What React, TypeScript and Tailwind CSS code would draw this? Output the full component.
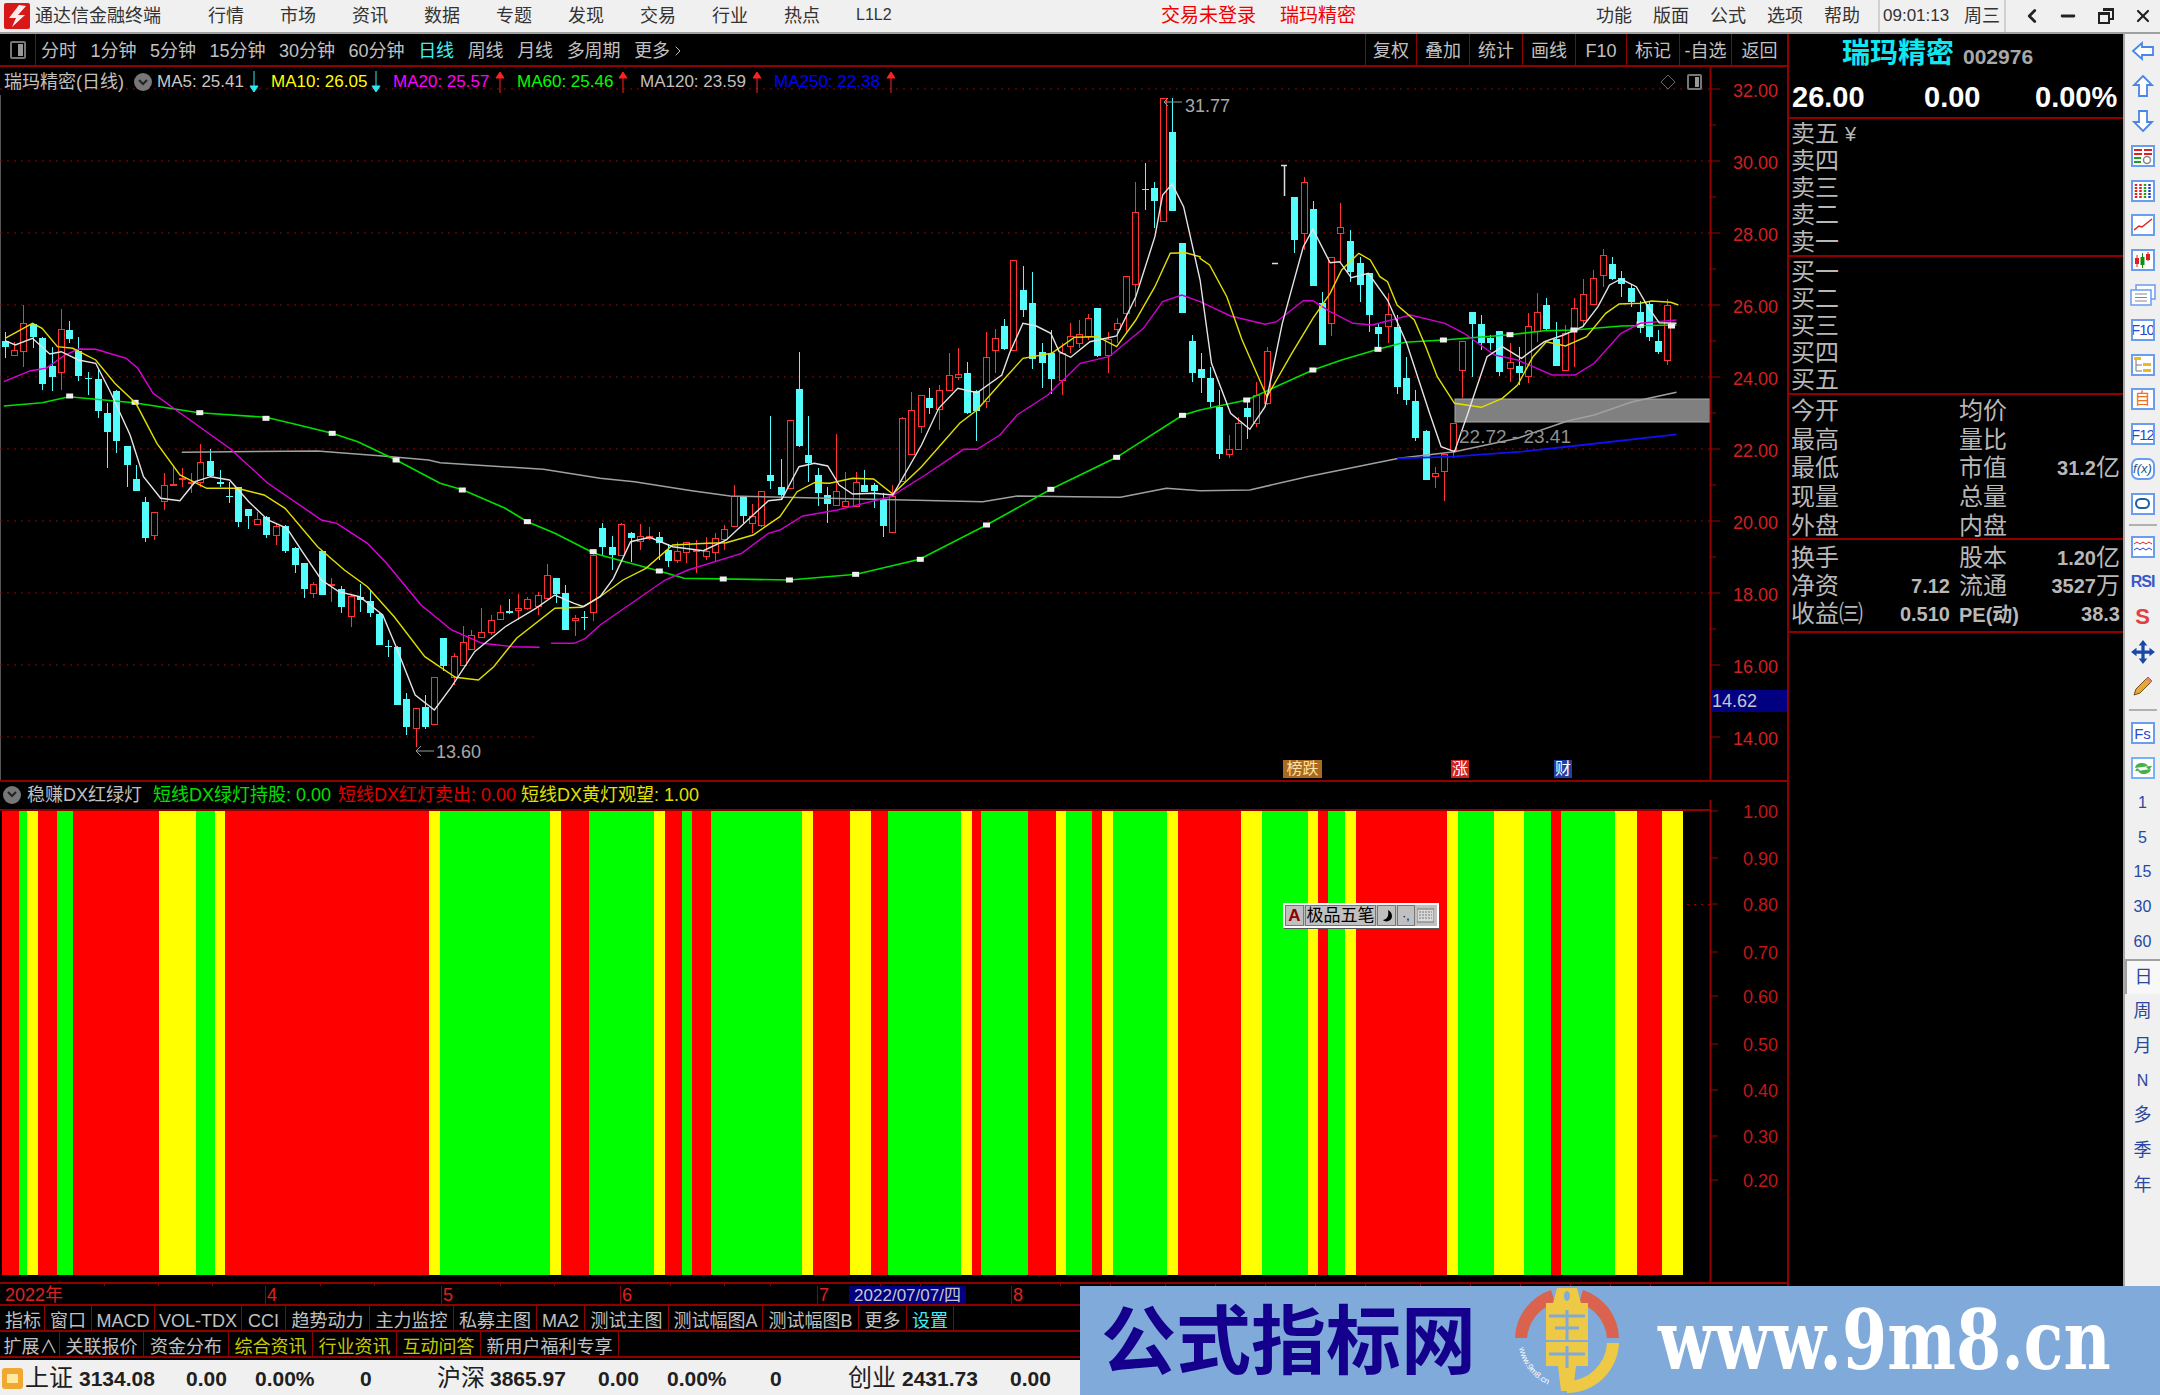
import React from 'react'
import { ChevronLeft, ChevronRight, Minus, X } from 'lucide-react'

type Candle = [number, number, number, number, number, number]
type Pt = [number, number]

const to8 = ([x, y]: Pt): Pt => [x / 2.613, 280 + y / 3]
const to9 = ([x, y]: Pt): Pt => [600 + x / 2.613, 80 + y / 3]
const to10 = ([x, y]: Pt): Pt => [1200 + x / 2.613, 130 + y / 3]

// x, wick top, body top, body bottom, wick bottom, 1 = red hollow / 0 = cyan
const candles8: Candle[] = [
  [13,155,182,200,235,0],[37,185,210,226,226,1],[61,75,130,215,262,1],[85,130,132,172,205,0],[111,172,175,313,330,0],
  [135,200,258,290,333,0],[159,88,148,278,330,1],[181,124,150,178,190,0],[205,170,212,288,303,0],[231,277,295,297,345,0],
  [257,265,296,393,415,0],[280,368,400,456,563,0],[304,330,332,483,518,0],[331,497,498,555,622,0],[355,555,597,632,632,0],
  [378,652,665,775,785,0],[402,697,697,765,780,1],[428,578,616,665,690,1],[452,560,612,616,616,1],[475,565,596,598,622,1],
  [498,578,606,610,640,1],[522,492,548,608,620,1],[550,508,542,588,590,0],[574,570,605,612,622,0],[598,605,648,652,668,0],
  [622,622,622,726,740,0],[648,686,687,708,748,0],[672,695,718,733,733,1],[696,708,710,766,775,0],[720,730,740,766,795,1],
  [746,736,737,812,820,0],[770,800,804,856,880,0],[794,848,848,928,955,0],[817,905,912,940,955,1],[841,812,812,946,946,0],
  [866,895,912,916,965,1],[892,918,926,982,998,0],[916,945,950,1008,1040,1],[940,912,950,960,995,0],[966,932,962,998,1010,0],
  [990,1000,1002,1095,1095,0],[1014,1080,1098,1100,1130,0],[1037,1098,1100,1275,1275,0],[1060,1240,1258,1340,1365,0],
  [1088,1285,1286,1345,1400,1],[1111,1245,1280,1342,1348,0],[1134,1190,1192,1332,1332,1],[1158,1074,1074,1158,1172,0],
  [1185,1118,1128,1192,1215,1],[1209,1038,1088,1156,1156,1],[1232,1050,1066,1108,1108,1],[1256,985,1057,1072,1072,1],
  [1284,1005,1020,1058,1065,1],[1306,975,998,1018,1020,1],[1330,957,993,998,1002,0],[1354,942,985,992,1020,1],
  [1378,950,958,985,990,1],[1405,935,945,978,1005,1],[1429,853,886,955,955,1],[1452,893,893,942,970,0],[1476,915,940,1050,1050,0],
  [1503,1005,1016,1020,1068,1],[1527,993,1010,1015,1050,0],[1550,820,825,998,1022,1],
]
const candles9: Candle[] = [
  [5,1330,1345,1400,1425,0],[32,1368,1400,1425,1470,0],[56,1330,1333,1425,1425,1],[80,1355,1360,1375,1445,0],[104,1332,1370,1385,1410,1],
  [128,1340,1370,1375,1380,1],[154,1355,1370,1390,1440,0],[178,1392,1410,1442,1462,0],[202,1385,1415,1442,1450,1],[226,1385,1388,1418,1450,1],
  [252,1380,1410,1412,1478,1],[276,1370,1415,1428,1440,1],[300,1360,1375,1418,1445,1],[323,1335,1347,1378,1410,1],[351,1215,1250,1338,1340,1],
  [374,1248,1250,1308,1330,0],[398,1272,1310,1330,1360,1],[421,1232,1234,1335,1340,1],[445,1008,1184,1203,1228,0],[472,1138,1220,1245,1258,0],
  [496,1022,1022,1225,1225,1],[520,815,927,1098,1100,0],[543,1008,1125,1150,1205,0],[570,1165,1184,1240,1278,0],[594,1222,1244,1272,1330,0],
  [617,1062,1234,1276,1276,1],[641,1175,1265,1280,1280,1],[668,1175,1208,1280,1280,1],[691,1170,1215,1236,1236,0],[715,1208,1216,1232,1285,0],
  [739,1238,1258,1338,1370,0],[763,1215,1250,1356,1356,1],[790,1012,1014,1203,1205,1],[813,935,990,1122,1122,1],[838,945,945,1040,1060,1],
  [860,925,955,983,1002,0],[887,915,932,988,1050,1],[911,818,887,932,932,1],[935,805,882,892,900,1],[959,845,878,998,1002,0],[983,930,932,992,1082,0],
  [1008,755,832,963,985,1],[1033,748,775,810,880,1],[1056,718,738,808,810,0],[1079,540,540,812,812,1],[1106,558,630,690,710,0],[1130,575,670,838,868,0],
  [1155,790,815,848,925,0],[1178,750,820,898,942,0],[1206,790,820,902,945,1],[1228,728,770,798,820,1],[1252,720,762,790,805,1],[1276,702,716,768,780,1],
  [1299,685,685,828,832,0],[1327,755,778,825,880,1],[1351,715,730,748,790,1],[1374,590,590,700,760,1],[1398,305,397,612,680,1],[1425,250,328,330,390,0],
  [1448,305,323,362,445,0],[1472,55,55,425,425,1],[1495,55,155,393,393,0],[1522,490,490,700,700,0],[1547,765,783,880,905,0],
]
const candles10: Candle[] = [
  [2,670,718,745,790,0],[26,710,745,815,830,0],[50,780,832,973,988,0],[76,915,958,972,985,1],[100,860,880,958,958,1],[123,815,835,860,928,0],
  [147,755,795,880,890,1],[175,650,665,820,825,1],[245,200,200,330,370,0],[271,142,157,310,360,1],[296,213,237,468,468,0],[319,485,520,645,645,0],
  [343,380,382,580,618,1],[366,218,292,310,400,1],[393,300,332,425,455,0],[418,380,398,465,515,0],[441,430,430,555,605,0],[465,580,592,612,650,0],
  [491,490,552,590,640,1],[515,555,592,770,793,0],[539,680,745,810,825,0],[563,780,813,925,933,0],[590,900,902,1050,1050,0],[613,1010,1030,1040,1075,1],
  [637,972,973,1025,1112,1],[660,880,880,960,985,1],[684,635,635,720,803,1],[711,547,547,582,740,0],[735,555,583,640,660,0],[759,615,623,640,660,0],
  [782,602,602,725,738,0],[810,640,697,715,755,1],[833,650,708,730,765,0],[856,550,590,740,760,1],[880,488,548,605,635,1],[904,505,525,597,600,0],
  [931,575,628,708,708,0],[954,585,610,720,720,1],[977,505,535,600,710,1],[1002,448,494,570,592,1],[1028,420,445,522,525,1],[1052,358,377,436,470,1],
  [1076,380,403,447,450,0],[1100,422,445,463,500,0],[1127,465,475,516,530,0],[1150,512,547,595,608,0],[1174,515,522,622,632,0],[1197,600,632,667,672,0],
  [1221,508,525,690,705,1],
]

const ma5: Pt[] = [
  ...([[13,182],[40,195],[85,175],[130,222],[160,215],[205,240],[250,250],[290,340],[340,465],[375,590],[420,655],[470,662],[510,605],[550,590],[600,600],[650,665],[700,720],[750,745],[790,815],[840,900],[885,935],[940,950],[1000,1005],[1035,1100],[1085,1245],[1135,1290],[1180,1220],[1240,1115],[1320,1040],[1400,985],[1450,945],[1500,970],[1525,980],[1568,950]] as Pt[]).map(to8),
  ...([[35,1495],[80,1385],[130,1372],[190,1400],[270,1412],[330,1380],[440,1262],[475,1258],[520,1160],[560,1150],[595,1158],[625,1215],[660,1242],[715,1240],[765,1245],[840,1095],[885,985],[935,925],[985,938],[1050,885],[1070,820],[1105,730],[1140,738],[1178,760],[1200,815],[1230,832],[1280,785],[1350,768],[1400,650],[1450,470],[1470,345],[1495,312],[1525,380],[1568,600]] as Pt[]).map(to9),
  ...([[30,700],[80,850],[130,898],[170,830],[215,580],[270,350],[295,298],[340,398],[365,395],[395,443],[440,430],[490,510],[540,640],[600,850],[630,950],[665,965],[700,850],[750,680],[790,650],[840,685],[900,635],[950,615],[1000,590],[1040,530],[1070,465],[1100,447],[1140,470],[1170,530],[1200,578],[1245,580]] as Pt[]).map(to10),
]
const ma10: Pt[] = [
  ...([[13,175],[85,130],[110,145],[150,200],[190,205],[250,240],[300,310],[355,370],[410,490],[470,585],[540,625],[620,625],[690,645],[745,685],[830,800],[900,870],[960,920],[1030,1010],[1110,1130],[1190,1192],[1250,1200],[1290,1160],[1350,1075],[1450,985],[1520,982],[1568,950]] as Pt[]).map(to8),
  ...([[60,1500],[120,1465],[190,1395],[280,1390],[330,1388],[400,1365],[470,1310],[515,1235],[560,1208],[600,1210],[660,1195],[715,1197],[765,1242],[840,1160],[940,1030],[985,990],[1050,905],[1105,835],[1180,820],[1240,772],[1300,770],[1350,800],[1400,720],[1450,620],[1490,520],[1530,518],[1568,530]] as Pt[]).map(to9),
  ...([[0,385],[25,405],[70,500],[110,630],[175,800],[240,670],[295,565],[340,490],[370,420],[415,370],[445,390],[470,440],[490,455],[515,525],[560,570],[590,650],[620,740],[665,820],[735,832],[790,805],[830,765],[870,680],[905,635],[955,648],[1010,620],[1060,550],[1095,522],[1150,520],[1180,513],[1230,517],[1250,525]] as Pt[]).map(to10),
]
const ma20a: Pt[] = ([[10,305],[80,272],[120,265],[170,225],[205,207],[250,208],[330,235],[360,265],[400,340],[460,390],[600,505],[700,610],[840,720],[880,730],[960,790],[1010,850],[1100,975],[1180,1050],[1260,1090],[1340,1100],[1410,1102]] as Pt[]).map(to8)
const ma20b: Pt[] = [
  ...([[1440,1090],[1500,1090],[1530,1075],[1568,1035]] as Pt[]).map(to8),
  ...([[170,1500],[230,1470],[370,1420],[440,1360],[470,1350],[530,1308],[620,1290],[760,1250],[850,1185],[950,1108],[985,1108],[1045,1065],[1090,1005],[1170,945],[1255,850],[1330,830],[1420,745],[1470,665],[1520,645],[1568,665]] as Pt[]).map(to9),
  ...([[80,558],[170,583],[200,575],[270,512],[295,512],[340,545],[400,580],[450,585],[550,555],[640,580],[690,610],[770,675],[830,690],[920,735],[980,735],[1030,700],[1100,610],[1150,580],[1245,570]] as Pt[]).map(to10),
]
const ma60: Pt[] = [
  ...([[10,378],[110,368],[180,350],[350,368],[520,398],[695,412],[780,435],[868,460],[935,485],[1035,540],[1150,610],[1210,630],[1320,685],[1378,725],[1450,760],[1550,818],[1568,825]] as Pt[]).map(to8),
  ...([[155,1473],[220,1495],[495,1500],[670,1483],[835,1438],[1010,1335],[1178,1228],[1350,1132],[1522,1006],[1568,990]] as Pt[]).map(to9),
  ...([[122,810],[295,720],[370,690],[465,658],[535,637],[636,630],[810,614],[900,602],[977,600],[1100,588],[1245,585]] as Pt[]).map(to10),
]
const ma120: Pt[] = [
  ...([[475,517],[830,513],[905,520],[1000,528],[1120,540],[1150,548],[1420,568],[1568,595]] as Pt[]).map(to8),
  ...([[90,1205],[240,1232],[340,1248],[1000,1265],[1090,1248],[1240,1250],[1360,1252],[1480,1225],[1568,1232]] as Pt[]).map(to9),
  ...([[130,1080],[280,1040],[520,985],[665,965],[830,925],[960,873],[1030,855],[1130,815],[1245,787]] as Pt[]).map(to10),
]
const ma250: Pt[] = ([[515,985],[660,980],[840,965],[1000,945],[1245,913]] as Pt[]).map(to10)
const markers: Pt[] = [
  ...([[182,348],[353,367],[522,398],[695,415],[868,460],[1035,540],[1208,630],[1378,725],[1550,815]] as Pt[]).map(to8),
  ...([[155,1473],[322,1497],[495,1500],[668,1483],[837,1438],[1010,1335],[1178,1228],[1350,1132],[1522,1006]] as Pt[]).map(to9),
  ...([[122,810],[295,720],[465,658],[636,630],[810,614],[977,600],[1150,582],[1232,588]] as Pt[]).map(to10),
]

const toPoints = (pts: Pt[]) => pts.map(([x, y]) => `${x.toFixed(1)},${y.toFixed(1)}`).join(' ')

const R = '#ff0000'
const G = '#00ff00'
const Y = '#ffff00'
const stripes: [number, number, string][] = [
  [2,19,R],[19,27,G],[27,38,Y],[38,57,R],[57,73,G],[73,159,R],[159,196,Y],[196,215,G],[215,225,Y],[225,429,R],[429,440,Y],[440,550,G],[550,561,Y],[561,589,R],
  [589,654,G],[654,665,Y],[665,682,R],[682,692,G],[692,711,R],[711,802,G],[802,813,Y],[813,850,R],[850,871,Y],[871,888,R],[888,961,G],[961,972,Y],[972,981,R],
  [981,1028,G],[1028,1056,R],[1056,1066,Y],[1066,1092,G],[1092,1102,R],[1102,1113,Y],[1113,1167,G],[1167,1178,Y],[1178,1241,R],[1241,1262,Y],[1262,1308,G],
  [1308,1318,Y],[1318,1328,R],[1328,1345,G],[1345,1356,Y],[1356,1447,R],[1447,1458,Y],[1458,1494,G],[1494,1524,Y],[1524,1551,G],[1551,1561,R],[1561,1615,G],
  [1615,1637,Y],[1637,1662,R],[1662,1683,Y],
]

function CandleMark({ c, conv }: { c: Candle; conv: (p: Pt) => Pt }) {
  const [x, wt] = conv([c[0], c[1]])
  const [, bt] = conv([c[0], c[2]])
  const [, bb] = conv([c[0], c[3]])
  const [, wb] = conv([c[0], c[4]])
  const cx = Math.round(x) + 0.5
  const color = c[5] ? '#ff3232' : '#54fcfc'
  return (
    <g shapeRendering="crispEdges">
      <line x1={cx} x2={cx} y1={wt} y2={wb} stroke={color} strokeWidth={1} />
      {c[5] ? (
        <rect x={cx - 3} y={bt} width={6} height={Math.max(bb - bt, 1)} fill="#000" stroke={color} strokeWidth={1} />
      ) : (
        <rect x={cx - 3.5} y={bt} width={7} height={Math.max(bb - bt, 1)} fill={color} />
      )}
    </g>
  )
}

function MainChart() {
  const grid = [32, 30, 28, 26, 24, 22, 20, 18]
  const yOf = (p: number) => 305 + (26 - p) * 36
  return (
    <svg width={1787} height={713} viewBox="0 67 1787 713" className="block">
      <line x1={0.5} x2={0.5} y1={95} y2={780} stroke="#555" />
      {grid.map(p => (
        <line key={p} x1={0} x2={1710} y1={yOf(p)} y2={yOf(p)} stroke="#a00000" strokeDasharray="2 5" />
      ))}
      {[16, 14].map(p => (
        <line key={p} x1={0} x2={538} y1={yOf(p)} y2={yOf(p)} stroke="#a00000" strokeDasharray="2 5" />
      ))}
      {candles8.map((c, i) => <CandleMark key={i} c={c} conv={to8} />)}
      {candles9.map((c, i) => <CandleMark key={i} c={c} conv={to9} />)}
      {candles10.map((c, i) => <CandleMark key={i} c={c} conv={to10} />)}
      <path d="M1281 165.500h6M1284.500 166v30M1272 263.500h6" stroke="#ddd" fill="none" strokeWidth={1.5} />
      <rect x={1455} y={399} width={255} height={23} fill="#808080" stroke="#aaa" strokeWidth={1} />
      <polyline points={toPoints(ma120)} fill="none" stroke="#a0a0a0" strokeWidth={1.5} />
      <polyline points={toPoints(ma250)} fill="none" stroke="#1010f0" strokeWidth={1.8} />
      <polyline points={toPoints(ma60)} fill="none" stroke="#00e000" strokeWidth={1.6} />
      {markers.map(([x, y], i) => (
        <rect key={i} x={x - 3.5} y={y - 2.5} width={7} height={5} fill="#f0f0f0" />
      ))}
      <polyline points={toPoints(ma20a)} fill="none" stroke="#e000e0" strokeWidth={1.4} />
      <polyline points={toPoints(ma20b)} fill="none" stroke="#d000d0" strokeWidth={1.4} />
      <polyline points={toPoints(ma10)} fill="none" stroke="#e0e000" strokeWidth={1.4} />
      <polyline points={toPoints(ma5)} fill="none" stroke="#e4e4e4" strokeWidth={1.4} />
      <path d="M1182 102h-18m4-4l-4 4 4 4" stroke="#999" fill="none" />
      <text x={1185} y={112} fill="#a8a8a8" fontSize={18}>31.77</text>
      <path d="M434 751h-18m5-5l-5 5 5 5" stroke="#999" fill="none" />
      <text x={436} y={758} fill="#a8a8a8" fontSize={18}>13.60</text>
      <text x={1459} y={443} fill="#909090" fontSize={19}>22.72 - 23.41</text>
      <line x1={1710.5} x2={1710.5} y1={67} y2={780} stroke="#900000" strokeWidth={2} />
      {[32, 31, 30, 29, 28, 27, 26, 25, 24, 23, 22, 21, 20, 19, 18, 17, 16, 15, 14].map(p => (
        <line key={p} x1={1711} x2={p % 2 === 0 ? 1720 : 1716} y1={yOf(p)} y2={yOf(p)} stroke="#a00000" />
      ))}
      {[32, 30, 28, 26, 24, 22, 20, 18, 16, 14].map(p => (
        <text key={p} x={1778} y={yOf(p) + 8} textAnchor="end" fill="#d02020" fontSize={18}>{p.toFixed(2)}</text>
      ))}
      <rect x={1711} y={690} width={76} height={22} fill="#000080" />
      <text x={1712} y={707} fill="#c8c8c8" fontSize={18}>14.62</text>
    </svg>
  )
}

function SignalChart() {
  const labels: [string, number][] = [['1.00', 811], ['0.90', 858], ['0.80', 904], ['0.70', 952], ['0.60', 996], ['0.50', 1044], ['0.40', 1090], ['0.30', 1136], ['0.20', 1180]]
  const ticks = [104, 158, 212, 320, 374, 500, 554, 670, 724, 770, 880, 920, 1060, 1110, 1165, 1215, 1265, 1315, 1365, 1420, 1470, 1520, 1570, 1610, 1650]
  return (
    <svg width={1787} height={477} viewBox="0 809 1787 477" className="block overflow-visible">
      <line x1={0} x2={1710} y1={810} y2={810} stroke="#900000" strokeWidth={2} />
      {stripes.map(([a, b, c]) => (
        <rect key={a} x={a} y={811} width={b - a} height={464} fill={c} shapeRendering="crispEdges" />
      ))}
      <line x1={1687} x2={1710} y1={904.5} y2={904.5} stroke="#a00000" strokeDasharray="2 5" />
      <line x1={1710.5} x2={1710.5} y1={800} y2={1283} stroke="#900000" strokeWidth={2} />
      {labels.map(([t, y]) => (
        <g key={t}>
          <line x1={1711} x2={1718} y1={y} y2={y} stroke="#a00000" />
          <text x={1778} y={y + 7} textAnchor="end" fill="#c01818" fontSize={18}>{t}</text>
        </g>
      ))}
      <line x1={0} x2={1787} y1={1283} y2={1283} stroke="#900000" strokeWidth={2} />
      {ticks.map(x => (
        <line key={x} x1={x + 0.5} x2={x + 0.5} y1={1284} y2={1286} stroke="#900000" />
      ))}
    </svg>
  )
}

function TrendArrow({ up }: { up?: boolean }) {
  const color = up ? '#ff2020' : '#30e8f0'
  return (
    <svg width={10} height={22} viewBox="0 0 10 22" className="flex-none">
      {up ? (
        <path d="M5 22V6M5 1l4 6H1z" stroke={color} fill={color} />
      ) : (
        <path d="M5 0v16M5 21l4-6H1z" stroke={color} fill={color} />
      )}
    </svg>
  )
}

function GrayChevron({ className }: { className: string }) {
  return (
    <span className={`flex h-[18px] w-[18px] flex-none items-center justify-center rounded-full bg-[#777] ${className}`}>
      <svg width={10} height={7} viewBox="0 0 10 7"><path d="M1 1l4 4 4-4" stroke="#222" strokeWidth={2} fill="none" /></svg>
    </span>
  )
}

function TopBar() {
  const menus = ['行情', '市场', '资讯', '数据', '专题', '发现', '交易', '行业', '热点']
  return (
    <div className="flex h-[34px] flex-none items-center border-b-2 border-[#a0a0a0] bg-[#f0f0f0] text-[18px] text-[#333]">
      <svg width={26} height={26} viewBox="0 0 26 26" className="ml-[4px] flex-none">
        <rect width={26} height={26} fill="#d81818" rx={2} />
        <path d="M15 2L5 15h7l-4 9 13-12h-7l8-9z" fill="#fff" opacity={0.92} />
      </svg>
      <span className="ml-[5px] w-[173px] whitespace-nowrap">通达信金融终端</span>
      <div className="flex gap-[36px]">
        {menus.map(m => <span key={m} className="w-[36px] whitespace-nowrap">{m}</span>)}
        <span className="w-[36px] whitespace-nowrap text-[16px]">L1L2</span>
      </div>
      <span className="ml-[269px] w-[119px] whitespace-nowrap text-[19px] text-[#f00000]">交易未登录</span>
      <span className="w-[316px] whitespace-nowrap text-[19px] text-[#f00000]">瑞玛精密</span>
      <div className="flex gap-[21px]">
        {['功能', '版面', '公式', '选项', '帮助'].map(m => <span key={m} className="w-[36px] whitespace-nowrap">{m}</span>)}
      </div>
      <div className="ml-[18px] flex h-full items-center border-x-2 border-[#d0d0d0] pl-[3px] pr-[4px]">
        <span className="w-[81px] whitespace-nowrap text-[17px]">09:01:13</span>
        <span className="whitespace-nowrap">周三</span>
      </div>
      <ChevronLeft className="ml-[15px] h-[22px] w-[22px] flex-none text-[#222]" strokeWidth={3} />
      <Minus className="ml-[15px] h-[20px] w-[20px] flex-none text-[#222]" strokeWidth={3.5} />
      <svg width={18} height={18} viewBox="0 0 18 18" className="ml-[19px] flex-none">
        <path d="M6 2h10v10h-3M2 6h10v10H2z M2 7h10 M6 3h10" stroke="#222" strokeWidth={2} fill="none" />
      </svg>
      <X className="ml-[18px] h-[20px] w-[20px] flex-none text-[#222]" strokeWidth={2.6} />
    </div>
  )
}

function Toolbar() {
  const items = ['1分钟', '5分钟', '15分钟', '30分钟', '60分钟']
  const right = ['复权', '叠加', '统计', '画线', 'F10', '标记', '-自选', '返回']
  const rightW = ['w-[51px]', 'w-[53px]', 'w-[53px]', 'w-[53px]', 'w-[51px]', 'w-[53px]', 'w-[52px]', 'w-[56px]']
  return (
    <div className="flex h-[33px] flex-none items-center border-b-2 border-[#900000] text-[18px] text-[#c0c0c0]">
      <div className="flex h-full w-[36px] flex-none items-center justify-center border-r border-[#900000]">
        <span className="flex h-[18px] w-[16px] items-center justify-end rounded-[2px] border-2 border-[#777] pr-[1px]"><span className="h-[12px] w-[5px] bg-[#999]" /></span>
      </div>
      <div className="ml-[5px] mt-[3px] flex items-center gap-[13.5px] whitespace-nowrap">
        <span>分时</span>
        {items.map(i => <span key={i}>{i}</span>)}
        <span className="text-[#40f0f0]">日线</span>
        <span>周线</span>
        <span>月线</span>
        <span>多周期</span>
        <span className="flex items-center">更多<ChevronRight className="h-[20px] w-[16px]" strokeWidth={1.5} /></span>
      </div>
      <div className="ml-auto flex h-full">
        {right.map((r, i) => (
          <span key={r} className={`flex h-full items-center justify-center whitespace-nowrap border-l border-[#900000] pt-[3px] ${rightW[i]}`}>{r}</span>
        ))}
      </div>
    </div>
  )
}

function MaLegend() {
  return (
    <div className="absolute left-0 top-[1px] flex h-[28px] items-center whitespace-nowrap text-[17px]">
      <span className="ml-[4px] w-[130px] text-[18px] text-[#c0c0c0]">瑞玛精密(日线)</span>
      <GrayChevron className="" />
      <span className="ml-[5px] w-[92px] text-[#c8c8c8]">MA5: 25.41</span>
      <TrendArrow />
      <span className="ml-[12px] w-[100px] text-[#ffff00]">MA10: 26.05</span>
      <TrendArrow />
      <span className="ml-[12px] w-[102px] text-[#ff00ff]">MA20: 25.57</span>
      <TrendArrow up />
      <span className="ml-[12px] w-[101px] text-[#00ff00]">MA60: 25.46</span>
      <TrendArrow up />
      <span className="ml-[12px] w-[112px] text-[#c0c0c0]">MA120: 23.59</span>
      <TrendArrow up />
      <span className="ml-[12px] w-[112px] text-[#0000ff]">MA250: 22.38</span>
      <TrendArrow up />
      <svg width={16} height={16} viewBox="0 0 16 16" className="absolute left-[1660px] top-[6px]"><path d="M8 1l7 7-7 7-7-7z" fill="none" stroke="#666" /></svg>
      <span className="absolute left-[1687px] top-[6px] flex h-[16px] w-[15px] items-center justify-end rounded-[2px] border-2 border-[#777] pr-[1px]"><span className="h-[10px] w-[4px] bg-[#999]" /></span>
    </div>
  )
}

function QuoteRows({ rows, h }: { rows: string[]; h: string }) {
  return (
    <>
      {rows.map(r => (
        <div key={r} className={`flex items-center pl-[2px] text-[24px] leading-none text-[#b8b8b8] ${h}`}>
          {r}
          {r === '卖五' && <span className="ml-[6px] text-[20px]">¥</span>}
        </div>
      ))}
    </>
  )
}

function StatRow({ a, av, b, bv, bu, h }: { a: string; av?: string; b: React.ReactNode; bv?: string; bu?: string; h: string }) {
  return (
    <div className={`flex items-center pl-[2px] leading-none text-[#b8b8b8] ${h}`}>
      <div className="flex w-[159px] items-center justify-between">
        <span className="text-[24px]">{a}</span>
        <span className="text-[20px] font-bold">{av}</span>
      </div>
      <div className="ml-[9px] flex w-[161px] items-center justify-between">
        <span className="text-[24px]">{b}</span>
        <span className="flex items-center text-[20px] font-bold">{bv}{bu && <span className="text-[24px] font-normal">{bu}</span>}</span>
      </div>
    </div>
  )
}

function QuotePanel() {
  return (
    <div className="h-full w-[336px] flex-none border-l-2 border-[#900000] bg-black">
      <div className="h-[85px] border-b-2 border-[#900000]">
        <div className="flex h-[40px] items-center pl-[53px] whitespace-nowrap">
          <span className="text-[28px] font-bold text-[#10e8f0]">瑞玛精密</span>
          <span className="ml-[9px] mt-[6px] text-[21px] font-bold text-[#a8a8a8]">002976</span>
        </div>
        <div className="mt-[3px] flex h-[41px] items-center text-[29px] font-bold text-white">
          <span className="ml-[3px] w-[132px]">26.00</span>
          <span className="w-[111px]">0.00</span>
          <span>0.00%</span>
        </div>
      </div>
      <div className="h-[138px] border-b-2 border-[#900000] pt-[1px]">
        <QuoteRows rows={['卖五', '卖四', '卖三', '卖二', '卖一']} h="h-[27.2px]" />
      </div>
      <div className="h-[138px] border-b-2 border-[#900000] pt-[1px]">
        <QuoteRows rows={['买一', '买二', '买三', '买四', '买五']} h="h-[27.2px]" />
      </div>
      <div className="h-[145px] border-b-2 border-[#900000] pt-[2px]">
        <StatRow a="今开" b="均价" h="h-[28.6px]" />
        <StatRow a="最高" b="量比" h="h-[28.6px]" />
        <StatRow a="最低" b="市值" bv="31.2" bu="亿" h="h-[28.6px]" />
        <StatRow a="现量" b="总量" h="h-[28.6px]" />
        <StatRow a="外盘" b="内盘" h="h-[28.6px]" />
      </div>
      <div className="h-[93px] border-b-2 border-[#900000] pt-[4px]">
        <StatRow a="换手" b="股本" bv="1.20" bu="亿" h="h-[28px]" />
        <StatRow a="净资" av="7.12" b="流通" bv="3527" bu="万" h="h-[28px]" />
        <StatRow a="收益㈢" av="0.510" b={<span className="text-[20px] font-bold">PE(动)</span>} bv="38.3" h="h-[28px]" />
      </div>
    </div>
  )
}

function Box({ children, className }: { children: React.ReactNode; className?: string }) {
  return (
    <span className={`flex h-[22px] w-[24px] items-center justify-center overflow-hidden border-2 border-[#6a9cf0] bg-white font-normal leading-none ${className ?? ''}`}>
      {children}
    </span>
  )
}

function Arrow({ d }: { d: string }) {
  return (
    <svg width={24} height={22} viewBox="0 0 24 22"><path d={d} fill="#fff" stroke="#4a86e8" strokeWidth={1.8} /></svg>
  )
}

function Slot({ children, active }: { children: React.ReactNode; active?: boolean }) {
  return (
    <div className={`flex h-[34.8px] flex-none items-center justify-center ${active ? 'border-2 border-b-0 border-r-0 border-[#a0a0a0] bg-[#f8f8f8]' : ''}`}>
      {children}
    </div>
  )
}

function SideBar() {
  const nums = ['1', '5', '15', '30', '60']
  const periods = ['周', '月', 'N', '多', '季', '年']
  return (
    <div className="flex h-full w-[37px] flex-none flex-col border-l-2 border-[#a8a8a8] bg-[#f0f0f0] font-bold text-[#2848a0]">
      <Slot><Arrow d="M2 11l9-8v4h11v8H11v4z" /></Slot>
      <Slot><Arrow d="M12 1l9 9h-5v11H8V10H3z" /></Slot>
      <Slot><Arrow d="M12 21l9-9h-5V1H8v11H3z" /></Slot>
      <Slot><Box><svg width={20} height={18}><path d="M1 3h8M1 7h8M11 3h8M11 7h8" stroke="#e02020" strokeWidth={2} /><path d="M1 11h7M1 15h7" stroke="#20a020" strokeWidth={2} /><circle cx={14} cy={13} r={3.5} fill="none" stroke="#888" strokeWidth={1.5} /></svg></Box></Slot>
      <Slot><Box><svg width={20} height={18}><path d="M3 2v15M7.500 2v15" stroke="#e02020" strokeWidth={2.5} strokeDasharray="2 1" /><path d="M12 2v15" stroke="#20a020" strokeWidth={2.5} strokeDasharray="2 1" /><path d="M16.500 2v15" stroke="#2040d0" strokeWidth={2.5} strokeDasharray="2 1" /></svg></Box></Slot>
      <Slot><Box><svg width={20} height={18}><path d="M1 14l5-4 3 1 5-4 5-4" stroke="#e02020" fill="none" strokeWidth={1.5} /></svg></Box></Slot>
      <Slot><Box><svg width={20} height={18}><path d="M4 4v12M15 1v9" stroke="#e02020" /><path d="M9.500 2v15" stroke="#109010" /><rect x={2} y={7} width={4} height={6} fill="#e02020" /><rect x={7.500} y={6} width={4} height={8} fill="#109010" /><rect x={13} y={3} width={4} height={6} fill="#e02020" /></svg></Box></Slot>
      <Slot><svg width={26} height={22}><rect x={6} y={1} width={19} height={14} fill="#fff" stroke="#6a9cf0" strokeWidth={1.5} /><rect x={1} y={6} width={20} height={15} fill="#fff" stroke="#6a9cf0" strokeWidth={1.5} /><path d="M5 10h12M5 13.500h12M5 17h12" stroke="#888" /></svg></Slot>
      <Slot><Box className="text-[15px] tracking-[-1px] text-[#2848d0]">F10</Box></Slot>
      <Slot><Box><svg width={20} height={18}><path d="M3 3v12h6M3 9h6" stroke="#777" fill="none" /><rect x={1} y={1} width={7} height={3} fill="#f0b820" /><rect x={10} y={7} width={8} height={3} fill="#f0b820" /><rect x={10} y={13} width={8} height={3} fill="#f0b820" /></svg></Box></Slot>
      <Slot><Box className="text-[16px] font-bold text-[#f07020]">自</Box></Slot>
      <Slot><Box className="text-[15px] tracking-[-1px] text-[#2848d0]">F12</Box></Slot>
      <Slot><Box className="rounded-[7px] border-[#5a8a9a] text-[13px] italic text-[#185890]">f(x)</Box></Slot>
      <Slot><Box><span className="h-[11px] w-[15px] rounded-full border-2 border-[#20609a]" /></Box></Slot>
      <div className="flex h-[8.6px] flex-none items-center justify-center"><span className="h-[2px] w-[28px] bg-[#b0b0b0]" /></div>
      <Slot><Box><svg width={20} height={18}><path d="M1 6l3-2 3 2 3-2 3 2 3-2 3 2" stroke="#e02020" fill="none" /><path d="M1 12l3-2 3 2 3-2 3 2 3-2 3 2" stroke="#2040d0" fill="none" /></svg></Box></Slot>
      <Slot><span className="text-[16px] tracking-[-1px] text-[#3858c8]">RSI</span></Slot>
      <Slot><span className="text-[22px] text-[#e04040]">S</span></Slot>
      <Slot><svg width={26} height={26} viewBox="0 0 24 24"><path d="M12 1l4 5h-2.500v4.500H18V8l5 4-5 4v-2.500h-4.500V18H16l-4 5-4-5h2.500v-4.500H6V16l-5-4 5-4v2.500h4.500V6H8z" fill="#1848a8" /></svg></Slot>
      <Slot><svg width={24} height={24} viewBox="0 0 24 24"><path d="M3 21l2-6L17 3l4 4L9 19z" fill="#e8a838" stroke="#705020" /><path d="M17 3l4 4-2 2-4-4z" fill="#e88080" /></svg></Slot>
      <div className="flex h-[12px] flex-none items-center justify-center"><span className="h-[2px] w-[28px] bg-[#b0b0b0]" /></div>
      <Slot><Box className="text-[15px] text-[#2848d0]">Fs</Box></Slot>
      <Slot><Box className="border-[#7ab0f8] bg-[#e0ecff]"><svg width={20} height={16}><path d="M2 8a7 6 0 0 1 13-2h-3l4 4 3-4h-2M18 9a7 6 0 0 1-13 2h3l-4-3-2 3h2" fill="#48b048" /></svg></Box></Slot>
      {nums.map(n => <Slot key={n}><span className="text-[16px] font-normal">{n}</span></Slot>)}
      <Slot active><span className="text-[18px] font-normal">日</span></Slot>
      {periods.map(n => <Slot key={n}><span className={n === 'N' ? 'text-[16px] font-normal' : 'text-[18px] font-normal'}>{n}</span></Slot>)}
    </div>
  )
}

function TabRow({ cells }: { cells: { label: string; w: string; color?: string }[] }) {
  return (
    <div className="flex h-[26px] flex-none border-b-2 border-[#900000] pl-[2px] text-[18px] text-[#c0c0c0]">
      {cells.map(c => (
        <span key={c.label} className={`flex h-full flex-none items-center justify-center whitespace-nowrap border-r border-[#900000] pt-[5px] leading-none ${c.w} ${c.color ?? ''}`}>
          {c.label}
        </span>
      ))}
    </div>
  )
}

function DateRow() {
  return (
    <div className="flex h-[20px] flex-none items-center border-b-2 border-[#900000] text-[18px] leading-none text-[#e02020]">
      <span className="w-[265px] flex-none pl-[5px]">2022年</span>
      <span className="w-[176px] flex-none border-l border-[#900000] pl-[1px]">4</span>
      <span className="w-[179px] flex-none border-l border-[#900000] pl-[1px]">5</span>
      <span className="w-[197px] flex-none border-l border-[#900000] pl-[1px]">6</span>
      <span className="w-[32px] flex-none border-l border-[#900000] pl-[1px]">7</span>
      <span className="flex h-full w-[117px] flex-none items-center justify-center whitespace-nowrap bg-[#000080] text-[17px] text-[#c8c8c8]">2022/07/07/四</span>
      <span className="w-[45px] flex-none" />
      <span className="flex-1 border-l border-[#900000] pl-[1px]">8</span>
    </div>
  )
}

function Badge({ children, className }: { children: React.ReactNode; className: string }) {
  return <span className={`absolute top-[693px] flex h-[18px] items-center justify-center text-[16px] leading-none ${className}`}>{children}</span>
}

function ImeBar() {
  return (
    <div className="absolute left-[1283px] top-[903px] flex h-[25px] w-[156px] items-stretch gap-[1px] border-2 border-white bg-[#c0c0c0] text-[17px] leading-none text-black shadow-[1px_1px_0_#555]">
      <span className="flex w-[19px] items-center justify-center border border-[#777] font-bold text-[#900000]">A</span>
      <span className="flex w-[71px] items-center justify-center whitespace-nowrap border border-[#777]">极品五笔</span>
      <span className="flex w-[19px] items-center justify-center border border-[#777]">
        <svg width={12} height={14}><path d="M7 1c1 5 0 9-5 10 3 3 9 1 9-4 0-3-2-5-4-6z" fill="#000" /></svg>
      </span>
      <span className="flex w-[18px] items-center justify-center border border-[#777] text-[12px]">·,</span>
      <span className="flex w-[19px] items-center justify-center">
        <svg width={17} height={15}><rect y={1} width={17} height={13} fill="#d8d8d8" stroke="#777" /><path d="M2 4h13M2 7h13M2 10h13" stroke="#777" strokeDasharray="2 1" /></svg>
      </span>
    </div>
  )
}

function StatusBar() {
  const num = 'text-[21px] font-semibold leading-none'
  return (
    <div className="flex h-[35px] flex-none items-center whitespace-nowrap bg-[#f0f0f0] pt-[1px] text-[#202020]">
      <span className="ml-[2px] flex h-[21px] w-[21px] flex-none items-center justify-center rounded-[3px] bg-[#f0a830]"><span className="h-[9px] w-[11px] bg-[#ffe8a0]" /></span>
      <span className="ml-[2px] w-[54px] text-[24px] leading-none">上证</span>
      <span className={`${num} w-[107px]`}>3134.08</span>
      <span className={`${num} w-[69px]`}>0.00</span>
      <span className={`${num} w-[105px]`}>0.00%</span>
      <span className={`${num} w-[77px]`}>0</span>
      <span className="w-[53px] text-[24px] leading-none">沪深</span>
      <span className={`${num} w-[108px]`}>3865.97</span>
      <span className={`${num} w-[69px]`}>0.00</span>
      <span className={`${num} w-[103px]`}>0.00%</span>
      <span className={`${num} w-[78px]`}>0</span>
      <span className="w-[54px] text-[24px] leading-none">创业</span>
      <span className={`${num} w-[108px]`}>2431.73</span>
      <span className={num}>0.00</span>
    </div>
  )
}

function Banner() {
  return (
    <div className="absolute left-[1080px] top-[1286px] flex h-[109px] w-[1080px] items-center bg-[#7faad9]">
      <span className="ml-[21px] mt-[3px] w-[410px] whitespace-nowrap text-[75px] font-bold leading-none text-[#14008c]">公式指标网</span>
      <svg width={112} height={109} viewBox="0 0 112 109" className="flex-none">
        <defs>
          <path id="logoRing" d="M8 62a50 50 0 0 0 40 40" />
        </defs>
        <path d="M4 52A52 52 0 0 1 40 4L44 17A40 40 0 0 0 16 52z" fill="#d9634f" />
        <path d="M108 52A52 52 0 0 0 72 4L68 17A40 40 0 0 1 96 52z" fill="#d9634f" />
        <path d="M108 57A52 52 0 0 1 56 107L56 95A40 40 0 0 0 96 57z" fill="#edc946" />
        <path d="M46 2h20l4 15h7v37H35V17h7z" fill="#edc946" />
        <path d="M35 56h42v24H65L62 105H50L47 80H35z" fill="#edc946" />
        <path d="M38 30h36M44 42h24M56 24v30M38 68h36M56 60v22" stroke="#7faad9" strokeWidth={3} />
        <ellipse cx={56} cy={10} rx={3} ry={5} fill="#7faad9" />
        <text fill="#fff" fontSize={8.5}><textPath href="#logoRing">www.9m8.cn</textPath></text>
      </svg>
      <span className="ml-[35px] origin-center scale-y-[1.28] whitespace-nowrap font-['DejaVu_Serif',serif] text-[65px] font-bold leading-none text-white">www.9m8.cn</span>
    </div>
  )
}

export default function App() {
  const row1 = [
    { label: '指标', w: 'w-[43px]' }, { label: '窗口', w: 'w-[47px]' }, { label: 'MACD', w: 'w-[63px]' }, { label: 'VOL-TDX', w: 'w-[87px]' },
    { label: 'CCI', w: 'w-[44px]' }, { label: '趋势动力', w: 'w-[84px]' }, { label: '主力监控', w: 'w-[84px]' }, { label: '私募主图', w: 'w-[83px]' },
    { label: 'MA2', w: 'w-[48px]' }, { label: '测试主图', w: 'w-[84px]' }, { label: '测试幅图A', w: 'w-[94px]' }, { label: '测试幅图B', w: 'w-[96px]' },
    { label: '更多', w: 'w-[48px]' }, { label: '设置', w: 'w-[47px]', color: 'text-[#40f0f0]' },
  ]
  const row2 = [
    { label: '扩展∧', w: 'w-[58px]' }, { label: '关联报价', w: 'w-[84px]' }, { label: '资金分布', w: 'w-[85px]' },
    { label: '综合资讯', w: 'w-[84px]', color: 'text-[#c8c800]' }, { label: '行业资讯', w: 'w-[84px]', color: 'text-[#c8c800]' },
    { label: '互动问答', w: 'w-[84px]', color: 'text-[#c8c800]' }, { label: '新用户福利专享', w: 'w-[138px]' },
  ]
  return (
    <div className="relative flex h-[1395px] w-[2160px] flex-col overflow-hidden bg-black font-['Liberation_Sans','Noto_Sans_CJK_SC',sans-serif]">
      <TopBar />
      <div className="flex h-[1326px] flex-none">
        <div className="flex w-[2123px] flex-none">
          <div className="flex w-[1787px] flex-none flex-col">
            <Toolbar />
            <div className="relative h-[713px] flex-none">
              <MainChart />
              <MaLegend />
              <Badge className="left-[1283px] w-[39px] bg-[#a86a20] text-[#ffe0a0]">榜跌</Badge>
              <Badge className="left-[1451px] w-[18px] bg-[#d02020] text-white">涨</Badge>
              <Badge className="left-[1554px] w-[18px] bg-[#2040a0] text-white">财</Badge>
            </div>
            <div className="flex h-[29px] flex-none items-center whitespace-nowrap border-y-2 border-t-[#900000] border-b-transparent text-[18px] leading-none">
              <GrayChevron className="ml-[3px]" />
              <span className="ml-[6px] w-[126px] text-[#c0c0c0]">稳赚DX红绿灯</span>
              <span className="w-[185px] text-[#00e000]">短线DX绿灯持股: 0.00</span>
              <span className="w-[183px] text-[#e00000]">短线DX红灯卖出: 0.00</span>
              <span className="text-[#e0e000]">短线DX黄灯观望: 1.00</span>
            </div>
            <SignalChart />
            <DateRow />
            <TabRow cells={row1} />
            <TabRow cells={row2} />
          </div>
          <QuotePanel />
        </div>
        <SideBar />
      </div>
      <StatusBar />
      <ImeBar />
      <Banner />
    </div>
  )
}
